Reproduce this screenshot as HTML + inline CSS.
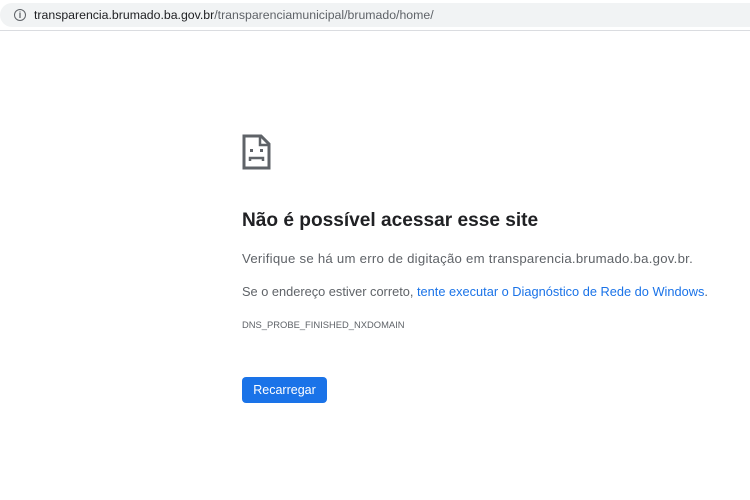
<!DOCTYPE html>
<html><head><meta charset="utf-8"><style>
html,body{margin:0;padding:0;background:#fff;width:750px;height:500px;overflow:hidden;font-family:"Liberation Sans",sans-serif}
.bar{position:absolute;left:0;top:3px;width:750px;height:24px;background:#f1f3f4;border-radius:12px 0 0 12px}
.line{position:absolute;left:0;top:30px;width:750px;height:1px;background:#dadce0}
.url{position:absolute;left:34px;top:8px;font-size:12.3px;color:#5f6368;white-space:nowrap}
.url b{font-weight:normal;color:#202124}
.info{position:absolute;left:14px;top:9px;width:10px;height:10px;border:1.3px solid #5f6368;border-radius:50%;font-size:9px;line-height:10px;text-align:center;color:#5f6368;font-weight:bold}
h1{position:absolute;left:242px;top:210px;margin:0;font-size:19.1px;font-weight:bold;color:#202124;white-space:nowrap}
p{position:absolute;left:242px;margin:0;font-size:13.2px;color:#5f6368;white-space:nowrap}
a{color:#1a73e8;text-decoration:none}
.code{font-size:9.4px;color:#5f6368}
.btn{position:absolute;left:242px;top:377px;width:85px;height:26px;background:#1a73e8;border-radius:4px;color:#fff;font-size:12.5px;text-align:center;line-height:26px}
</style></head><body>
<div class="bar"></div><div class="line"></div>
<div class="info">i</div>
<div class="url"><b>transparencia.brumado.ba.gov.br</b>/transparenciamunicipal/brumado/home/</div>
<svg style="position:absolute;left:242px;top:134px" width="30" height="36" viewBox="0 0 30 36">
<path d="M2 2H19L27 10V34H2Z" fill="none" stroke="#5f6368" stroke-width="3"/>
<path d="M18 2V11H27" fill="none" stroke="#5f6368" stroke-width="2.5"/>
<rect x="8" y="15" width="3" height="3" fill="#5f6368"/><rect x="18" y="15" width="3" height="3" fill="#5f6368"/>
<path d="M8 27V24H21V27" fill="none" stroke="#5f6368" stroke-width="2.5"/>
</svg>
<h1>Não é possível acessar esse site</h1>
<p style="top:251px;letter-spacing:0.25px">Verifique se há um erro de digitação em transparencia.brumado.ba.gov.br.</p>
<p style="top:284px;font-size:12.8px">Se o endereço estiver correto, <a>tente executar o Diagnóstico de Rede do Windows</a>.</p>
<p class="code" style="top:319px">DNS_PROBE_FINISHED_NXDOMAIN</p>
<div class="btn">Recarregar</div>
</body></html>
